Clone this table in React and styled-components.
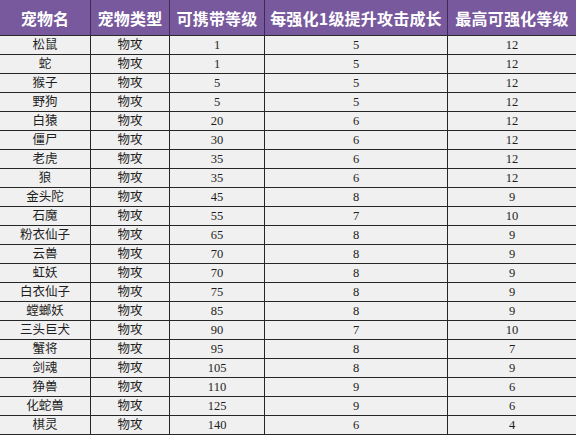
import React from "react";
import styled, { createGlobalStyle } from "styled-components";

const Global = createGlobalStyle`
  html, body { margin: 0; padding: 0; background: #ffffff; }
  #root { width: 576px; height: 436px; overflow: hidden; }
`;

const Table = styled.table`
  width: 576px;
  table-layout: fixed;
  border-collapse: separate;
  border-spacing: 0;
`;

const Col = styled.col`
  width: ${(p) => p.$w}px;
`;

const HeadCell = styled.th`
  height: 35px;
  padding: 0;
  background: #78599d;
  color: #ffffff;
  font-family: "Noto Sans CJK SC", "Noto Sans", sans-serif;
  font-weight: 700;
  font-size: 16px;
  letter-spacing: 0.2px;
  text-align: center;
  white-space: nowrap;
  border-bottom: 1px solid #2a2a2a;
  border-left: ${(p) => (p.$first ? "none" : "1px solid #3d2a55")};
`;

const Cell = styled.td`
  height: 18px;
  padding: 0;
  background: #f0f0f0;
  color: #1e1e1e;
  font-family: "Liberation Serif", "Noto Sans CJK SC", serif;
  font-size: 12.5px;
  line-height: 18px;
  text-align: center;
  white-space: nowrap;
  border-bottom: 1px solid #262626;
  border-left: ${(p) => (p.$first ? "none" : "1px solid #262626")};
`;

const headers = ["宠物名", "宠物类型", "可携带等级", "每强化1级提升攻击成长", "最高可强化等级"];
const widths = [90, 79, 95, 183, 129];

const rows = [
  ["松鼠", "物攻", 1, 5, 12],
  ["蛇", "物攻", 1, 5, 12],
  ["猴子", "物攻", 5, 5, 12],
  ["野狗", "物攻", 5, 5, 12],
  ["白猿", "物攻", 20, 6, 12],
  ["僵尸", "物攻", 30, 6, 12],
  ["老虎", "物攻", 35, 6, 12],
  ["狼", "物攻", 35, 6, 12],
  ["金头陀", "物攻", 45, 8, 9],
  ["石魔", "物攻", 55, 7, 10],
  ["粉衣仙子", "物攻", 65, 8, 9],
  ["云兽", "物攻", 70, 8, 9],
  ["虹妖", "物攻", 70, 8, 9],
  ["白衣仙子", "物攻", 75, 8, 9],
  ["螳螂妖", "物攻", 85, 8, 9],
  ["三头巨犬", "物攻", 90, 7, 10],
  ["蟹将", "物攻", 95, 8, 7],
  ["剑魂", "物攻", 105, 8, 9],
  ["狰兽", "物攻", 110, 9, 6],
  ["化蛇兽", "物攻", 125, 9, 6],
  ["棋灵", "物攻", 140, 6, 4],
];

export default function App() {
  return (
    <>
      <Global />
      <Table>
        <colgroup>
          {widths.map((w, i) => (
            <Col key={i} $w={w} />
          ))}
        </colgroup>
        <thead>
          <tr>
            {headers.map((h, i) => (
              <HeadCell key={h} $first={i === 0}>
                {h}
              </HeadCell>
            ))}
          </tr>
        </thead>
        <tbody>
          {rows.map((r) => (
            <tr key={r[0]}>
              {r.map((v, i) => (
                <Cell key={i} $first={i === 0}>
                  {v}
                </Cell>
              ))}
            </tr>
          ))}
        </tbody>
      </Table>
    </>
  );
}
